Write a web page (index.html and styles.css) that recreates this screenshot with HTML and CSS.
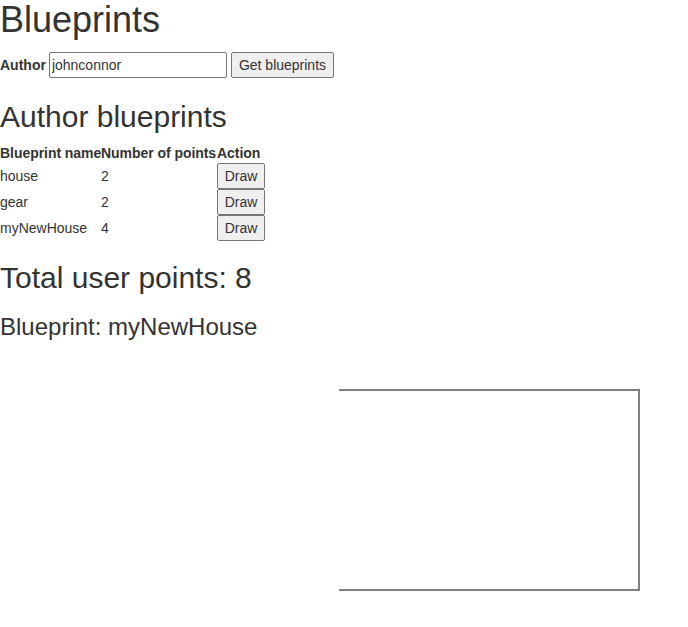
FILE: index.html
```html
<!DOCTYPE html>
<html>
<head>
<meta charset="utf-8">
<title>Blueprints</title>
<link rel="stylesheet" href="styles.css">
</head>
<body>
<h1 class="title">Blueprints</h1>
<div class="search">
  <label class="search-label" for="author">Author</label>
  <input class="search-input" id="author" type="text" value="johnconnor">
  <button class="btn btn-get" type="button">Get blueprints</button>
</div>
<h2 class="section-title">Author blueprints</h2>
<table class="bp-table">
  <colgroup>
    <col class="col-name">
    <col class="col-points">
    <col class="col-action">
  </colgroup>
  <thead>
    <tr><th>Blueprint name</th><th>Number of points</th><th>Action</th></tr>
  </thead>
  <tbody>
    <tr><td>house</td><td>2</td><td><button class="btn btn-draw" type="button">Draw</button></td></tr>
    <tr><td>gear</td><td>2</td><td><button class="btn btn-draw" type="button">Draw</button></td></tr>
    <tr><td>myNewHouse</td><td>4</td><td><button class="btn btn-draw" type="button">Draw</button></td></tr>
  </tbody>
</table>
<h2 class="total">Total user points: 8</h2>
<h3 class="current">Blueprint: myNewHouse</h3>
<svg class="canvas" width="688" height="270" viewBox="0 0 688 270">
  <polyline points="339,40 639,40 639,240 339,240" fill="none" stroke="#808080" stroke-width="2"/>
</svg>
</body>
</html>
```
FILE: styles.css
```css
html, body {
  margin: 0;
  padding: 0;
  background: #ffffff;
}
body {
  font-family: "Liberation Sans", Arial, Helvetica, sans-serif;
  font-size: 14px;
  line-height: 20px;
  color: #333333;
}
.title {
  margin: 0 0 12px 0;
  font-size: 36px;
  line-height: 40px;
  font-weight: 500;
}
.search {
  display: flex;
  align-items: center;
  height: 26px;
}
.search-label {
  font-weight: bold;
  margin-right: 3px;
}
.search-input {
  box-sizing: border-box;
  width: 178px;
  height: 26px;
  margin: 0 4px 0 0;
  padding: 1px 2px;
  border: 1px solid #767676;
  border-radius: 2px;
  font-family: inherit;
  font-size: 14px;
  color: #333333;
  background: #ffffff;
  outline: none;
}
.btn {
  box-sizing: border-box;
  height: 26px;
  margin: 0;
  padding: 2px 7px;
  border: 1px solid #767676;
  border-radius: 2px;
  background: #efefef;
  font-family: inherit;
  font-size: 14px;
  line-height: 20px;
  color: #333333;
}
.section-title {
  margin: 22px 0 10px 0;
  font-size: 30px;
  line-height: 33px;
  font-weight: 500;
}
.bp-table {
  border-collapse: collapse;
  border-spacing: 0;
  table-layout: fixed;
  width: 265px;
}
.col-name { width: 101px; }
.col-points { width: 116px; }
.col-action { width: 48px; }
.bp-table th,
.bp-table td {
  padding: 0;
  text-align: left;
  vertical-align: middle;
  white-space: nowrap;
}
.bp-table th {
  font-weight: bold;
  line-height: 20px;
  letter-spacing: -0.05px;
}
.btn-draw {
  display: block;
  width: 48px;
  padding: 2px 0;
  text-align: center;
}
.total {
  margin: 20px 0 20px 0;
  font-size: 30px;
  line-height: 33px;
  font-weight: 500;
}
.current {
  margin: 0 0 10px 0;
  font-size: 24px;
  line-height: 26px;
  font-weight: 500;
}
.canvas {
  display: block;
}
```
